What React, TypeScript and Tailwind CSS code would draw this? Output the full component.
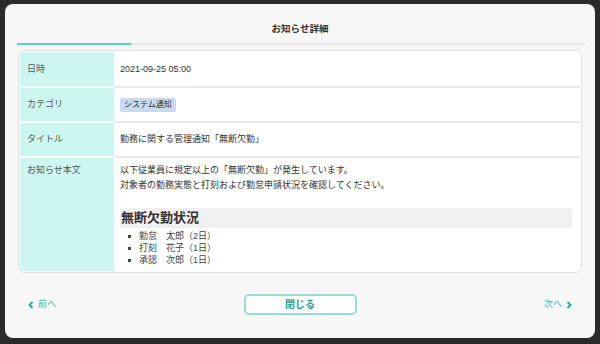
import React from "react";

const font = { fontFamily: '"Liberation Sans", "Noto Sans CJK JP", sans-serif' };

function Row({
  label,
  children,
  h,
  center = true,
  last = false,
}: {
  label: string;
  children: React.ReactNode;
  h?: string;
  center?: boolean;
  last?: boolean;
}) {
  return (
    <div className={`flex ${h ?? ""} ${last ? "flex-1" : "border-b-2 border-[#e8eaed]"}`}>
      <div
        className={`w-[94px] shrink-0 bg-[#cdf6f0] px-[7px] flex ${
          center ? "items-center" : "items-start pt-[5px]"
        } ${last ? "" : "border-b-2 border-white -mb-[2px]"} text-[9px] text-[#555] leading-[15px]`}
      >
        {label}
      </div>
      <div
        className={`flex-1 px-[6px] flex ${
          center ? "items-center" : "flex-col items-stretch pt-[5px]"
        } text-[9px] text-[#333] leading-[15px]`}
      >
        {children}
      </div>
    </div>
  );
}

export default function App() {
  return (
    <div className="w-[600px] h-[344px] bg-[#2b2b2b] pt-[4px] pl-[5px]" style={font}>
      <div className="w-[590px] h-[334px] bg-[#f7f7f7] rounded-[8px] flex flex-col">
        <div className="h-[39px] flex items-end justify-center pb-[7px]">
          <span className="text-[9.5px] font-bold text-[#333]">お知らせ詳細</span>
        </div>
        <div className="mx-[12px] mr-[10px] h-[2px] bg-[#e6e6e6] flex">
          <div className="w-[114px] h-[2px] bg-[#5ccfc3]" />
        </div>
        <div className="mx-[13px] mt-[5px] h-[223px] border border-[#e0e0e0] rounded-[6px] bg-white p-[1px] flex flex-col">
          <Row label="日時" h="h-[36px]">
            2021-09-25 05:00
          </Row>
          <Row label="カテゴリ" h="h-[35px]">
            <span className="bg-[#c8daf2] text-[#333] text-[8px] leading-[14px] px-[4px] rounded-[2px]">
              システム通知
            </span>
          </Row>
          <Row label="タイトル" h="h-[35px]">
            勤務に関する管理通知「無断欠勤」
          </Row>
          <Row label="お知らせ本文" center={false} last>
            <div>以下従業員に規定以上の「無断欠勤」が発生しています。</div>
            <div>対象者の勤務実態と打刻および勤怠申請状況を確認してください。</div>
            <div className="mt-[15px] mr-[2px] h-[20px] bg-[#f0f0f0] rounded-[3px] flex items-center px-[1px]">
              <span className="text-[13px] font-bold text-[#333] leading-[20px]">無断欠勤状況</span>
            </div>
            <ul className="mt-[2px] pl-[8px] text-[9px] leading-[12px] text-[#444]">
              {["勤怠　太郎（2日）", "打刻　花子（1日）", "承認　次郎（1日）"].map((t) => (
                <li key={t} className="flex items-center">
                  <span className="w-[3px] h-[3px] bg-[#444] mr-[8px]" />
                  {t}
                </li>
              ))}
            </ul>
          </Row>
        </div>
        <div className="flex-1 flex items-center justify-between px-[23px] pb-[2px]">
          <div className="flex items-center gap-[4px] text-[9px] text-[#3bb5a8] w-[60px]">
            <svg width="6" height="8" viewBox="0 0 6 8">
              <path d="M4.5 1 L1.5 4 L4.5 7" stroke="#1aa89a" strokeWidth="1.8" fill="none" />
            </svg>
            前へ
          </div>
          <button className="w-[113px] h-[21px] border-2 border-[#96ddd4] rounded-[5px] bg-white text-[10px] font-bold text-[#25a295]">
            閉じる
          </button>
          <div className="flex items-center justify-end gap-[4px] text-[9px] text-[#3bb5a8] w-[60px]">
            次へ
            <svg width="6" height="8" viewBox="0 0 6 8">
              <path d="M1.5 1 L4.5 4 L1.5 7" stroke="#1aa89a" strokeWidth="1.8" fill="none" />
            </svg>
          </div>
        </div>
      </div>
    </div>
  );
}
